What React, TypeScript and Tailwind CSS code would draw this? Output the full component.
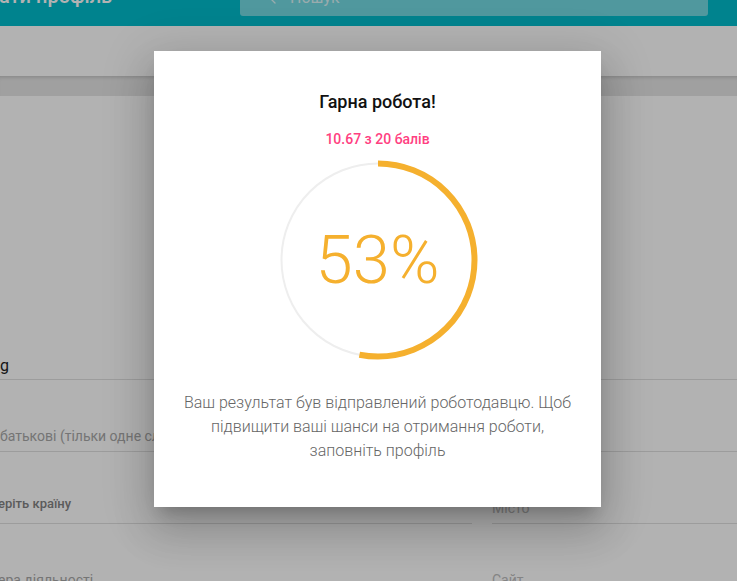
import React from "react";
import { ChevronLeft } from "lucide-react";

const R = 96.5;
const C = 2 * Math.PI * R;
const PCT = 0.53;

function Field({
  text,
  textClass,
  pb,
}: {
  text: string;
  textClass: string;
  pb: string;
}) {
  return (
    <div className={`h-[72px] flex flex-col justify-end border-b border-[#e0e0e0] ${pb}`}>
      <div className={`whitespace-nowrap ${textClass}`}>{text}</div>
    </div>
  );
}

export default function App() {
  return (
    <div
      className="relative w-[737px] h-[581px] overflow-hidden bg-white"
      style={{ fontFamily: "Roboto, 'Noto Sans', sans-serif" }}
    >
      {/* header */}
      <div className="h-[26px] bg-[#00bccc] flex items-start overflow-hidden">
        <div className="w-[240px] shrink-0 -mt-[16px] text-[20px] leading-[24px] font-medium text-white whitespace-nowrap">
          <span className="-ml-[1px]">ати профіль</span>
        </div>
        <div className="w-[468px] h-[16px] rounded-b-[3px] bg-white/45 flex items-start overflow-hidden">
          <ChevronLeft
            className="ml-[25px] -mt-[9px] text-white/75 shrink-0"
            size={16}
            strokeWidth={2}
          />
          <div className="ml-[9px] -mt-[12px] text-[16px] leading-[20px] text-white/75">
            Пошук
          </div>
        </div>
      </div>

      {/* toolbar */}
      <div className="h-[50px] bg-white" />
      <div className="h-[20px] bg-[#e6e6e6] shadow-[inset_0_4px_4px_-3px_rgba(0,0,0,0.18)]" />

      {/* form */}
      <div className="pt-[212px]">
        <div className="grid grid-cols-[472px_1fr] gap-x-[20px]">
          <Field text="g" textClass="text-[16px] leading-[24px] text-[#212121]" pb="pb-[1px]" />
          <Field text="" textClass="text-[16px] leading-[24px]" pb="pb-[1px]" />
          <Field
            text="батькові (тільки одне слово)"
            textClass="text-[14px] leading-[24px] text-[#a8a8a8]"
            pb="pb-[3px]"
          />
          <Field text="" textClass="text-[14px] leading-[24px]" pb="pb-[3px]" />
          <Field
            text="еріть країну"
            textClass="-ml-[2px] text-[13px] leading-[24px] font-medium text-[#838383]"
            pb="pb-[7px]"
          />
          <Field text="Місто" textClass="text-[14px] leading-[24px] text-[#bdbdbd]" pb="pb-[3px]" />
          <Field
            text="ера діяльності"
            textClass="-ml-[2px] text-[14px] leading-[24px] text-[#a8a8a8]"
            pb="pb-[3px]"
          />
          <Field text="Сайт" textClass="text-[14px] leading-[24px] text-[#bdbdbd]" pb="pb-[3px]" />
        </div>
      </div>

      {/* overlay */}
      <div className="absolute inset-0 bg-black/30" />

      {/* modal */}
      <div className="absolute left-[154px] top-[51px] w-[447px] h-[456px] bg-white flex flex-col items-center pt-[39px] shadow-[0_11px_15px_-7px_rgba(0,0,0,0.2),0_24px_38px_3px_rgba(0,0,0,0.14),0_9px_46px_8px_rgba(0,0,0,0.12)]">
        <div className="text-[18px] leading-[24px] font-medium text-[#111]">Гарна робота!</div>
        <div className="mt-[15px] text-[14px] leading-[20px] font-medium text-[#ff4081]">
          10.67 з 20 балів
        </div>
        <div className="mt-[11px] grid w-[200px] h-[200px]">
          <svg
            className="col-start-1 row-start-1"
            width="200"
            height="200"
            viewBox="0 0 200 200"
          >
            <circle cx="100" cy="100" r={R} fill="none" stroke="#eeeeee" strokeWidth="2" />
            <circle
              cx="100"
              cy="100"
              r={R}
              fill="none"
              stroke="#f5b02e"
              strokeWidth="6"
              strokeDasharray={`${C * PCT} ${C}`}
              transform="rotate(-90 100 100)"
            />
          </svg>
          <div className="col-start-1 row-start-1 flex items-center justify-center text-[67px] leading-[67px] font-light text-[#f5b02e]">
            53%
          </div>
        </div>
        <div className="mt-[31px] text-center text-[16px] leading-[24px] font-light text-[#666]">
          <div className="whitespace-nowrap">Ваш результат був відправлений роботодавцю. Щоб</div>
          <div className="whitespace-nowrap">підвищити ваші шанси на отримання роботи,</div>
          <div className="whitespace-nowrap">заповніть профіль</div>
        </div>
      </div>
    </div>
  );
}
